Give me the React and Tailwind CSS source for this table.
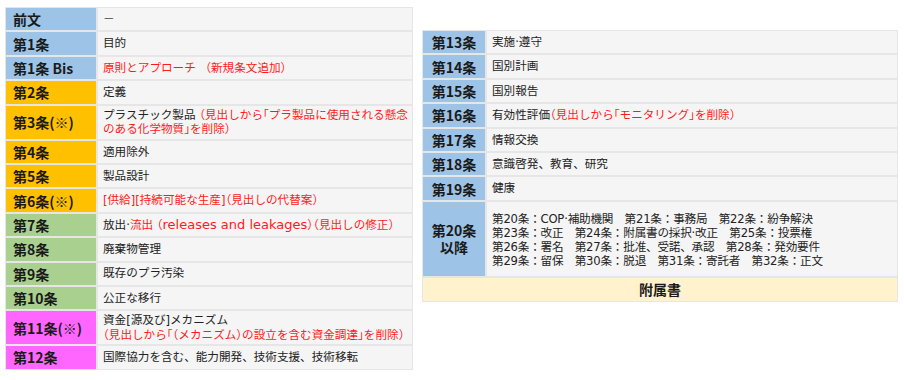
import React from 'react';

const HEAD = "font-['Noto_Sans_CJK_JP',sans-serif]";
const BODY = "font-['DejaVu_Sans','Noto_Sans_CJK_JP',sans-serif]";

const colors = {
  blue: 'bg-[#9dc3e6]',
  orange: 'bg-[#ffc000]',
  green: 'bg-[#a9d08e]',
  pink: 'bg-[#ff66ff]',
};

// 赤字（括弧は半角幅で詰める）
const Red = ({ children, full }) => (
  <span className={`text-[#ff1a1a] ${full ? '' : "[font-feature-settings:'halt']"}`}>{children}</span>
);

// 1行（見出しセル＋内容セル）
const Row = ({ label, color, center, children, bodyClass = 'py-[2px] leading-[14.5px]', headClass = 'leading-[18px]' }) => (
  <>
    <div
      className={`${colors[color]} ${HEAD} ${headClass} flex min-h-[22.4px] items-center px-[7px] py-[2px] text-[14px] font-bold text-[#1a1a1a] ${
        center ? 'justify-center text-center' : ''
      }`}
    >
      {label}
    </div>
    <div className={`bg-[#f5f5f5] ${BODY} ${bodyClass} flex items-center whitespace-nowrap px-[5px] text-[11.6px] text-[#222]`}>
      <div>{children}</div>
    </div>
  </>
);

const leftRows = [
  { label: '前文', color: 'blue', body: <span className="text-[#444]">－</span> },
  { label: '第1条', color: 'blue', body: '目的' },
  { label: '第1条 Bis', color: 'blue', body: <Red full>原則とアプローチ （新規条文追加）</Red> },
  { label: '第2条', color: 'orange', body: '定義' },
  {
    label: '第3条(※)',
    color: 'orange',
    body: (
      <>
        プラスチック製品 <Red>（見出しから「プラ製品に使用される懸念<br />のある化学物質」を削除）</Red>
      </>
    ),
  },
  { label: '第4条', color: 'orange', body: '適用除外' },
  { label: '第5条', color: 'orange', body: '製品設計' },
  { label: '第6条(※)', color: 'orange', body: <Red>[供給][持続可能な生産]（見出しの代替案）</Red> },
  {
    label: '第7条',
    color: 'green',
    body: (
      <>
        放出·
        <Red>
          流出 （<span className="text-[13px] leading-[14px]">releases and leakages</span>）（見出しの修正）
        </Red>
      </>
    ),
  },
  { label: '第8条', color: 'green', body: '廃棄物管理' },
  { label: '第9条', color: 'green', body: '既存のプラ汚染' },
  { label: '第10条', color: 'green', body: '公正な移行' },
  {
    label: '第11条(※)',
    color: 'pink',
    body: (
      <>
        資金[源及び]メカニズム
        <br />
        <Red>（見出しから「（メカニズム）の設立を含む資金調達」を削除）</Red>
      </>
    ),
  },
  { label: '第12条', color: 'pink', body: '国際協力を含む、能力開発、技術支援、技術移転' },
];

const rightRows = [
  { label: '第13条', body: '実施·遵守' },
  { label: '第14条', body: '国別計画' },
  { label: '第15条', body: '国別報告' },
  {
    label: '第16条',
    body: (
      <>
        有効性評価<Red>（見出しから「モニタリング」を削除）</Red>
      </>
    ),
  },
  { label: '第17条', body: '情報交換' },
  { label: '第18条', body: '意識啓発、教育、研究' },
  { label: '第19条', body: '健康' },
];

const laterArticles = [
  '第20条：COP·補助機関　第21条：事務局　第22条：紛争解決',
  '第23条：改正　第24条：附属書の採択·改正　第25条：投票権',
  '第26条：署名　第27条：批准、受諾、承認　第28条：発効要件',
  '第29条：留保　第30条：脱退　第31条：寄託者　第32条：正文',
];

export default function App() {
  return (
    <div className="flex items-start gap-[9px] bg-white pl-[5px] pt-[7px] w-[904px] h-[380px]">
      {/* 第1条〜第12条 */}
      <div className="grid w-[408px] grid-cols-[90px_314px] gap-[2px] bg-[#e6e6e6] p-[1px]">
        {leftRows.map((r) => (
          <Row key={r.label} label={r.label} color={r.color}>
            {r.body}
          </Row>
        ))}
      </div>

      {/* 第13条以降 */}
      <div className="mt-[23px] grid w-[476px] grid-cols-[62px_410px] gap-[2px] bg-[#e6e6e6] p-[1px]">
        {rightRows.map((r) => (
          <Row key={r.label} label={r.label} color="blue" center>
            {r.body}
          </Row>
        ))}
        <Row
          label={<>第20条<br />以降</>}
          color="blue"
          center
          headClass="leading-[17px]"
          bodyClass="pt-[10px] pb-[8px] leading-[14px] tracking-[-0.2px]"
        >
          {laterArticles.map((line) => (
            <div key={line}>{line}</div>
          ))}
        </Row>
        <div className={`col-span-2 bg-[#fff2cc] ${HEAD} py-[2px] text-center text-[14px] font-bold leading-[19px] text-[#1a1a1a]`}>
          附属書
        </div>
      </div>
    </div>
  );
}
